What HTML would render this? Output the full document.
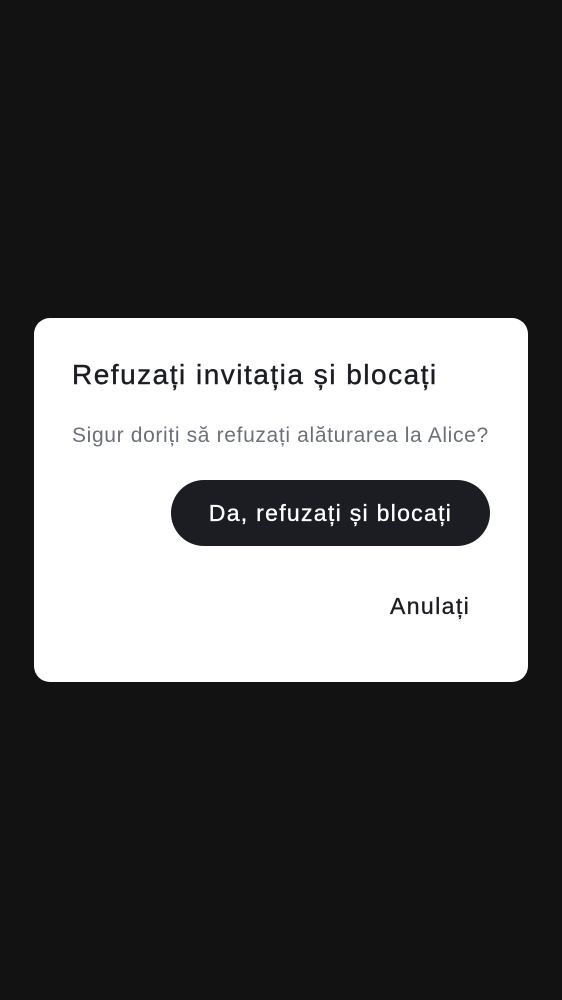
<!DOCTYPE html>
<html><head><meta charset="utf-8"><style>
html,body{margin:0;padding:0;width:562px;height:1000px;background:#121212;overflow:hidden;font-family:"Liberation Sans",sans-serif;}
.d{position:absolute;left:34px;top:318px;width:494px;height:364px;background:#fff;border-radius:16px;}
.t{position:absolute;left:38px;top:41px;font-size:28px;color:#1b1d22;white-space:nowrap;letter-spacing:1.5px;-webkit-text-stroke:0.4px #1b1d22;}
.s{position:absolute;left:38px;top:106px;font-size:21px;color:#6b7079;white-space:nowrap;letter-spacing:0.65px;}
.b{position:absolute;left:137px;top:162px;width:319px;height:66px;border-radius:33px;background:#1b1d22;color:#fff;font-size:23px;display:flex;align-items:center;justify-content:center;letter-spacing:1.3px;-webkit-text-stroke:0.35px #fff;}
.c{position:absolute;left:356px;top:275px;font-size:23px;color:#1b1d22;letter-spacing:1.4px;-webkit-text-stroke:0.35px #1b1d22;}
</style></head><body>
<div class="d">
<div class="t">Refuzați invitația și blocați</div>
<div class="s">Sigur doriți să refuzați alăturarea la Alice?</div>
<div class="b">Da, refuzați și blocați</div>
<div class="c">Anulați</div>
</div>
</body></html>
